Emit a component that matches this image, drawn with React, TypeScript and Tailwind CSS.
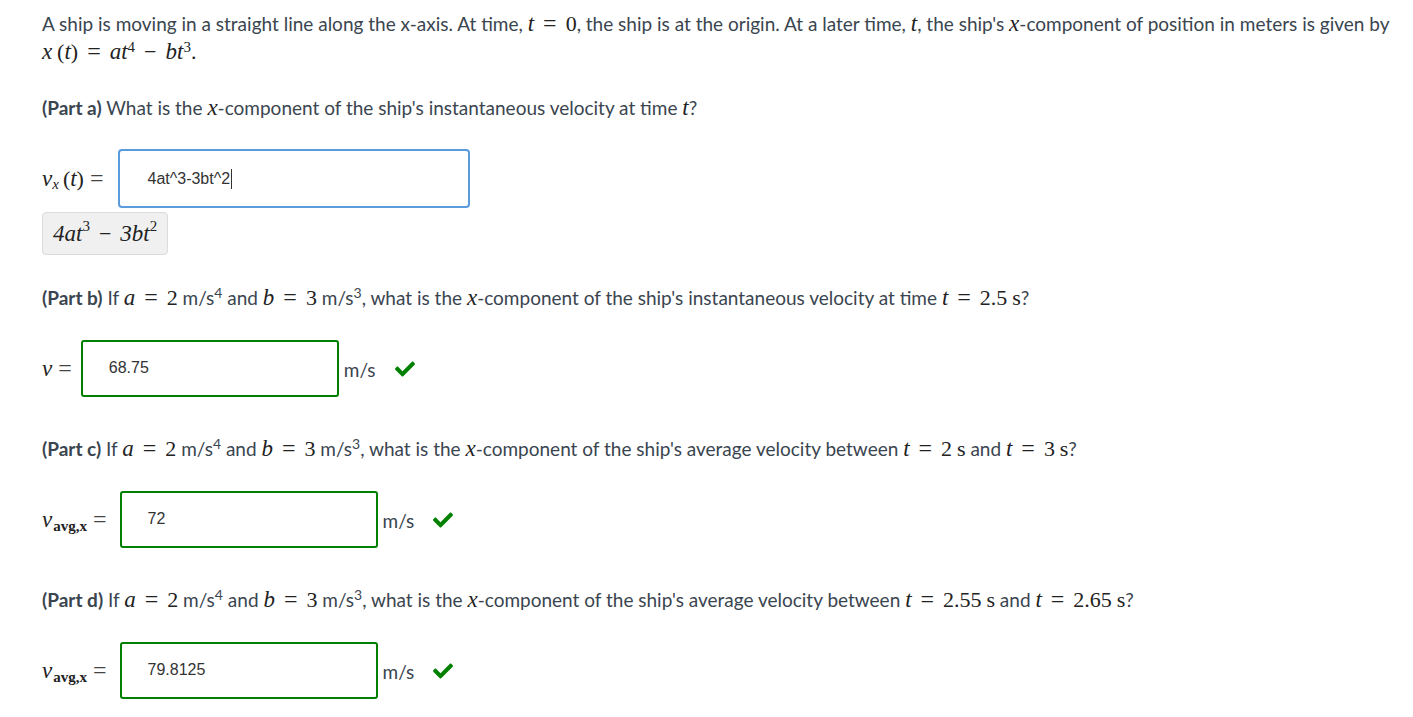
import React from 'react';

const M = ({ children }: { children: React.ReactNode }) => (
  <span className="font-['Liberation_Serif',serif] text-[23px] leading-[0] italic text-[#222]">{children}</span>
);

const N = ({ children }: { children: React.ReactNode }) => (
  <span className="font-['Liberation_Serif',serif] text-[22px] leading-[0] not-italic text-[#222]">{children}</span>
);

const Sup = ({ children }: { children: React.ReactNode }) => (
  <sup className="font-['Liberation_Serif',serif] text-[15px] not-italic text-[#222]">{children}</sup>
);

const Eq = () => (
  <span className="mx-[9px] font-['Liberation_Serif',serif] text-[24px] leading-[0] text-[#222]">=</span>
);

const LabelEq = () => (
  <span className="ml-[6px] mr-[5px] font-['Liberation_Serif',serif] text-[24px] leading-[0] text-[#444]">=</span>
);

const Minus = () => (
  <span className="mx-[9px] font-['Liberation_Serif',serif] text-[22px] leading-[0] text-[#222]">−</span>
);

const Check = () => (
  <svg width="24" height="20" viewBox="0 0 512 512" className="text-[#008000]" fill="currentColor">
    <path d="M173.9 439.4l-166.4-166.4c-10-10-10-26.2 0-36.2l36.2-36.2c10-10 26.2-10 36.2 0L192 312.7 432.1 72.6c10-10 26.2-10 36.2 0l36.2 36.2c10 10 10 26.2 0 36.2l-294.4 294.4c-10 10-26.2 10-36.2 0z" />
  </svg>
);

const Units = () => (
  <span>
    <N>2</N> m/s<sup className="text-[14px]">4</sup> and <M>b</M>
    <Eq />
    <N>3</N> m/s<sup className="text-[14px]">3</sup>
  </span>
);

const Answer = ({ label, value }: { label: React.ReactNode; value: string }) => (
  <div className="flex items-center">
    <div>{label}</div>
    <div className="flex h-[57px] w-[258px] items-center rounded-[3px] border-2 border-[#008000] pl-[26px] font-['Liberation_Sans',Arial,sans-serif] text-[16px] text-[#333]">
      <span className="-mt-[1px]">{value}</span>
    </div>
    <span className="ml-[5px] mt-[3px]">m/s</span>
    <span className="ml-[17px] mt-[1px]">
      <Check />
    </span>
  </div>
);

const VAvg = () => (
  <span className="inline-flex items-baseline pr-[8px] pt-[14px]">
    <M>v</M>
    <sub className="ml-[1px] font-['Liberation_Serif',serif] text-[15px] font-bold not-italic text-[#222]">avg,x</sub>
    <LabelEq />
  </span>
);

export default function App() {
  return (
    <div className="min-h-screen bg-white pl-[42px] pr-[16px] pt-[10px] font-['Lato',sans-serif] text-[19px] leading-[28px] text-[#3a4550]">
      <p>
        A ship is moving in a straight line along the x-axis. At time, <M>t</M>
        <Eq />
        <N>0</N>, the ship is at the origin. At a later time, <M>t</M>, the ship's <M>x</M>-component of position in meters is given by
        <br />
        <M>x</M> <N>(</N>
        <M>t</M>
        <N>)</N>
        <Eq />
        <M>at</M>
        <Sup>4</Sup>
        <Minus />
        <M>bt</M>
        <Sup>3</Sup>
        <N>.</N>
      </p>

      <p className="mt-[28px]">
        <b className="font-bold">(Part a)</b> What is the <M>x</M>-component of the ship's instantaneous velocity at time <M>t</M>?
      </p>

      <div className="mt-[27px] flex items-center">
        <div className="pr-[10px]">
          <M>v</M>
          <sub className="font-['Liberation_Serif',serif] text-[15px] italic text-[#222]">x</sub>
          <span className="ml-[4px]">
            <N>(</N>
          </span>
          <M>t</M>
          <N>)</N>
          <LabelEq />
        </div>
        <div className="flex h-[59px] w-[352px] items-center rounded-[4px] border-2 border-[#5b9bdc] pl-[27px] font-['Liberation_Sans',Arial,sans-serif] text-[16px] text-[#333]">
          4at^3-3bt^2
          <span className="ml-[1px] inline-block h-[20px] w-px bg-[#333]" />
        </div>
      </div>
      <div className="mt-[4px] inline-flex h-[43px] items-center rounded-[4px] border border-[#dcdcdc] bg-[#f0f0f0] px-[10px]">
        <M>4at</M>
        <Sup>3</Sup>
        <Minus />
        <M>3bt</M>
        <Sup>2</Sup>
      </div>

      <p className="mt-[29px]">
        <b className="font-bold">(Part b)</b> If <M>a</M>
        <Eq />
        <Units />, what is the <M>x</M>-component of the ship's instantaneous velocity at time <M>t</M>
        <Eq />
        <N>2.5</N> <N>s</N>?
      </p>
      <div className="mt-[28px]">
        <Answer
          label={
            <span className="pr-[4px]">
              <M>v</M>
              <LabelEq />
            </span>
          }
          value="68.75"
        />
      </div>

      <p className="mt-[38px]">
        <b className="font-bold">(Part c)</b> If <M>a</M>
        <Eq />
        <Units />, what is the <M>x</M>-component of the ship's average velocity between <M>t</M>
        <Eq />
        <N>2</N> <N>s</N> and <M>t</M>
        <Eq />
        <N>3</N> <N>s</N>?
      </p>
      <div className="mt-[28px]">
        <Answer label={<VAvg />} value="72" />
      </div>

      <p className="mt-[38px]">
        <b className="font-bold">(Part d)</b> If <M>a</M>
        <Eq />
        <Units />, what is the <M>x</M>-component of the ship's average velocity between <M>t</M>
        <Eq />
        <N>2.55</N> <N>s</N> and <M>t</M>
        <Eq />
        <N>2.65</N> <N>s</N>?
      </p>
      <div className="mt-[28px]">
        <Answer label={<VAvg />} value="79.8125" />
      </div>
    </div>
  );
}
